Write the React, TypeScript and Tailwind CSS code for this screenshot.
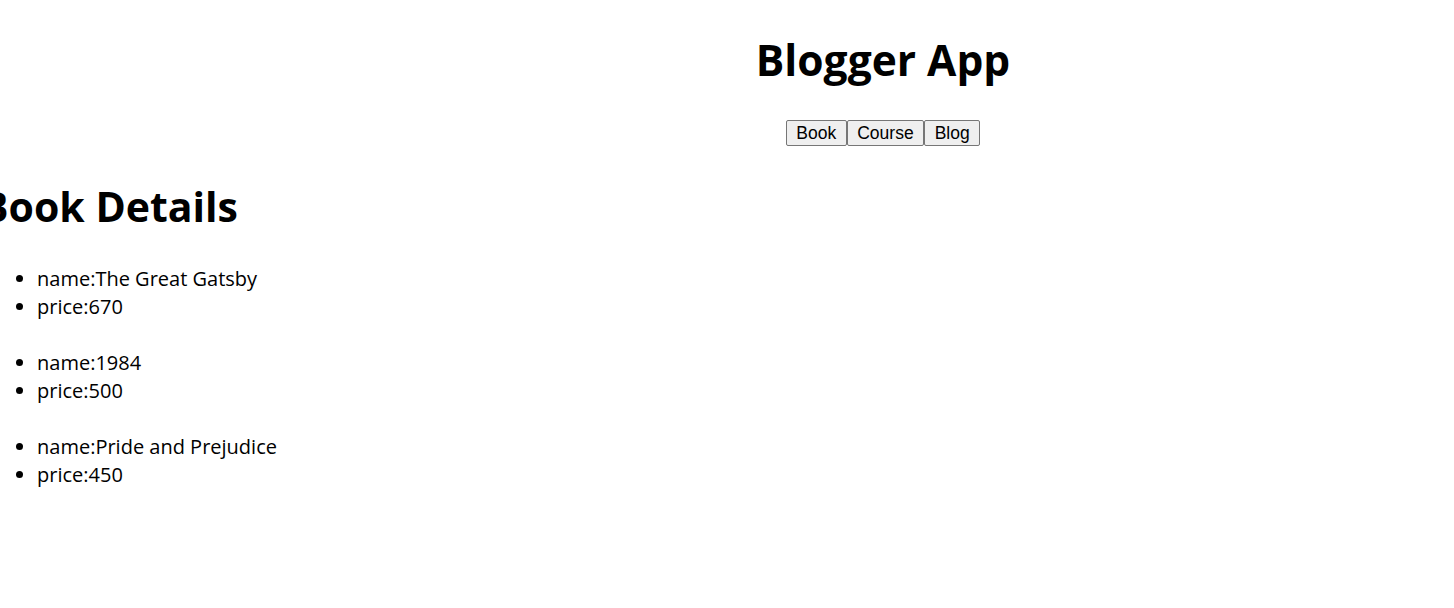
import * as React from "react";

const books = [
  { name: "The Great Gatsby", price: 670 },
  { name: "1984", price: 500 },
  { name: "Pride and Prejudice", price: 450 },
];

const App: React.FC = () => {
  return (
    <div className="w-full min-h-[608px] overflow-hidden bg-white text-black font-['Open_Sans',sans-serif] text-[20px] leading-[28px]">
      <div className="ml-[-3px] w-[1772px]">
        <div className="text-center pt-[32px]">
          <h1 className="text-[42.5px] font-bold leading-[56px]">Blogger App</h1>
          <div className="mt-[32px] flex justify-center font-['Liberation_Sans',sans-serif] text-[17.5px] leading-[22px]">
            <button className="px-[9.5px] py-[1px] border border-[#767676] bg-[#efefef] rounded-[2px]">Book</button>
            <button className="px-[9.5px] py-[1px] border border-[#767676] bg-[#efefef] rounded-[2px]">Course</button>
            <button className="px-[9.5px] py-[1px] border border-[#767676] bg-[#efefef] rounded-[2px]">Blog</button>
          </div>
        </div>
        <h2 className="mt-[32px] ml-[-16px] text-[41px] font-bold leading-[56px]">Book Details</h2>
        <div className="mt-[31px]">
          {books.map((b) => (
            <ul key={b.name} className="list-disc pl-[40px] mb-[28px]">
              <li>name:{b.name}</li>
              <li>price:{b.price}</li>
            </ul>
          ))}
        </div>
      </div>
    </div>
  );
};

export default App;
